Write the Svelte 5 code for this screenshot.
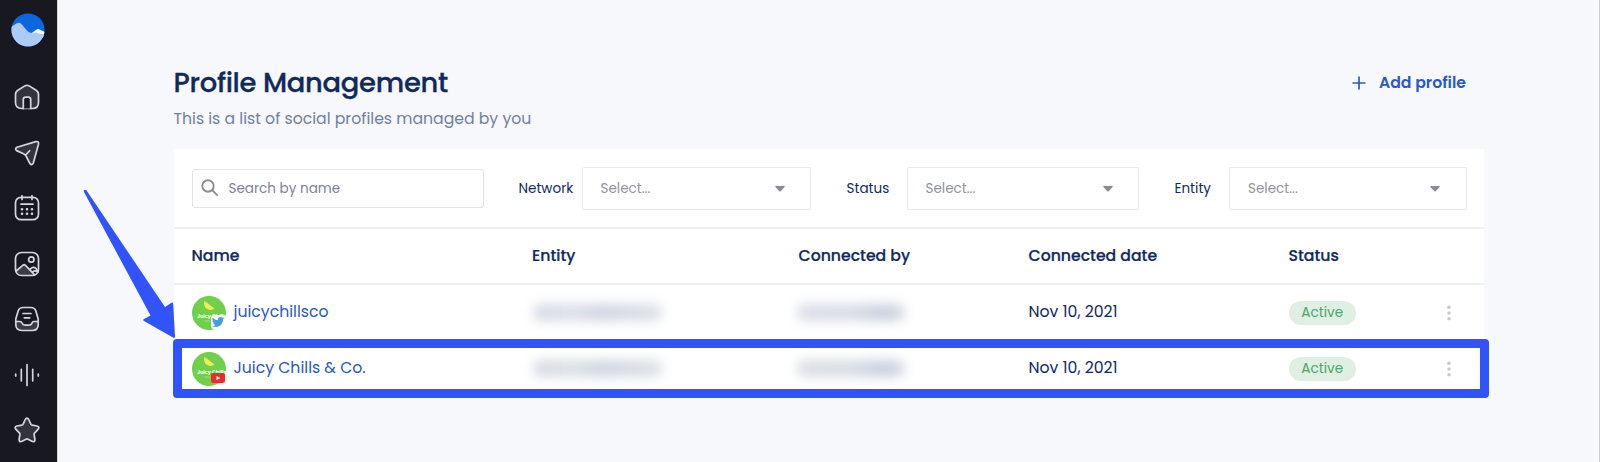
<script lang="ts">
  const filters = [
    { label: 'Network', key: 'network' },
    { label: 'Status', key: 'status' },
    { label: 'Entity', key: 'entity' },
  ];

  const columns = ['Name', 'Entity', 'Connected by', 'Connected date', 'Status'];

  const profiles = [
    { name: 'juicychillsco', network: 'twitter', date: 'Nov 10, 2021', status: 'Active' },
    { name: 'Juicy Chills & Co.', network: 'youtube', date: 'Nov 10, 2021', status: 'Active' },
  ];
</script>

<div class="shell">
  <nav class="sidebar">
    <svg class="logo" viewBox="0 0 34 34">
      <defs>
        <clipPath id="logo-clip"><circle cx="17" cy="17" r="16.6" /></clipPath>
      </defs>
      <g clip-path="url(#logo-clip)">
        <rect width="34" height="34" fill="#0b66df" />
        <path d="M20 20.500L25.500 16.500Q27.500 15.200 29 16.800L34 19V25H20Z" fill="#f4f8ff" />
        <path d="M0 14L5.500 10.500Q8.500 8.500 11 11.500L15 16.500Q18 20 21.500 20L25 19.500Q28 21.500 34 20.800V34H0Z" fill="#aecbf5" />
      </g>
    </svg>
    <svg class="icon" viewBox="0 0 26 26">
      <path class="fill" d="M1.500 10.500Q1.500 8 3.500 6.500L10.800 1.900Q13 .6 15.200 1.900L22.500 6.500Q24.500 8 24.500 10.500V18.500Q24.500 24.500 18.500 24.500H7.500Q1.500 24.500 1.500 18.500Z" />
      <path class="cut" d="M9.300 24.500V15.600Q9.300 13.200 11.700 13.200H14.300Q16.700 13.200 16.700 15.600V24.500" />
    </svg>
    <svg class="icon" viewBox="0 0 26 26">
      <path class="fill" d="M3 7.300L21.800 1.600Q25 .9 24.500 4.200L19.300 23Q18 26 15.800 23.400L12.300 16.500Q11.500 14.500 9.500 13.700L2.600 10.600Q.4 8.800 3 7.300ZM11.500 15.200L15.600 10.700" />
    </svg>
    <svg class="icon" viewBox="0 0 26 26">
      <rect x="1.500" y="2.300" width="23" height="22.400" rx="5.500" />
      <path d="M8 .8V4.500M18 .8V4.500M7 9.200H19" />
      <path class="dots" d="M8 14.300h.01M13 14.300h.01M18 14.300h.01M8 18.800h.01M13 18.800h.01M18 18.800h.01" />
    </svg>
    <svg class="icon" viewBox="0 0 26 26">
      <path class="mass" d="M3 20L9 14.200Q10.200 13.200 11.400 14.300L20.500 24H8Q4 24 3 20Z" />
      <rect x="1.500" y="1.500" width="23" height="23" rx="6" />
      <circle cx="17.300" cy="8.500" r="2.700" />
      <path d="M2.200 20L9 14.200Q10.200 13.200 11.400 14.300L20.700 23.800M16 18.300Q19.300 14.800 22 17.500L24 21M18.500 21.200Q20 18.800 23.500 20.800" />
    </svg>
    <svg class="icon" viewBox="0 0 26 26">
      <path class="mass" d="M2 16H7.500Q9 20 13 20T18.500 16H24Q24.500 24.500 18.500 24.500H7.500Q1.500 24.500 2 16Z" />
      <path d="M9 1.500H17Q20.500 1.500 21.700 4.500L24.200 13V18.500Q24.200 24.500 18.200 24.500H7.800Q1.800 24.500 1.800 18.500V13L4.300 4.500Q5.500 1.500 9 1.500ZM2 15.500H6Q7.500 15.500 8.200 17.300T11 19.200H15Q17 19.200 17.800 17.300T20 15.500H24M9 7.500H17M10.300 11.800H15.700" />
    </svg>
    <svg class="icon" viewBox="0 0 26 26">
      <path d="M1.700 12.200V14M7.300 7.400V18.800M13 2.700V23.500M18.700 7.400V18.800M24.300 12.200V14" />
    </svg>
    <svg class="icon" viewBox="0 0 26 26">
      <path class="fill" d="M11.300 2.500Q13 -.4 14.700 2.500L17 7.300Q17.400 8 18.200 8.200L23 9Q26.300 10 23.800 12.600L20.500 16.100Q20 16.700 20.100 17.500L20.900 22.500Q21 25.500 18 24.300L14 22.200Q13 21.700 12 22.200L8 24.300Q5 25.500 5.100 22.500L5.900 17.500Q6 16.700 5.500 16.100L2.200 12.600Q-.3 10 3 9L7.800 8.200Q8.600 8 9 7.300Z" />
    </svg>
  </nav>

  <main>
    <header class="page-head">
      <div>
        <h1>Profile Management</h1>
        <p>This is a list of social profiles managed by you</p>
      </div>
      <button class="add">
        <svg viewBox="0 0 14 14"><path d="M7 .5V13.500M.5 7H13.500" /></svg>
        <span>Add profile</span>
      </button>
    </header>

    <section class="card">
      <div class="filters">
        <div class="search">
          <svg viewBox="0 0 18 18"><circle cx="7" cy="7" r="5.700" /><path d="M11.200 11.200L16.700 16.700" /></svg>
          <span>Search by name</span>
        </div>
        {#each filters as filter}
          <div class="filter {filter.key}">
            <span class="label">{filter.label}</span>
            <div class="select">
              <span>Select...</span>
              <svg viewBox="0 0 10 6"><path d="M.8 0H9.200Q10.300 .2 9.600 1.100L5.700 5.300Q5 5.900 4.300 5.300L.4 1.100Q-.3 .2 .8 0Z" /></svg>
            </div>
          </div>
        {/each}
      </div>

      <div class="row head">
        {#each columns as column}
          <span>{column}</span>
        {/each}
      </div>

      {#each profiles as profile}
        <div class="row" class:selected={profile.network === 'youtube'}>
          <div class="profile">
            <div class="avatar">
              <svg viewBox="0 0 34 34">
                <circle cx="17" cy="17" r="17" fill="#70cf4b" />
                <path d="M12.500 4.800L22.500 12.500Q19 15.300 14.800 12.800Q10.800 9.800 12.500 4.800Z" fill="#f3e85c" />
                <text x="5" y="21.500">Juicy Chills</text>
                <path d="M12.500 25H18.500" stroke="#b0e59a" stroke-width=".8" />
              </svg>
              {#if profile.network === 'twitter'}
                <svg class="network-badge" viewBox="0 0 14 14">
                  <rect width="14" height="14" rx="3" fill="#fff" />
                  <path transform="translate(.8 .8) scale(.52)" fill="#4a9be6" d="M23.950 4.570a10 10 0 0 1-2.820.77 4.960 4.960 0 0 0 2.160-2.720c-.95.55-2 .95-3.130 1.180a4.920 4.920 0 0 0-8.380 4.480C7.690 8.100 4.070 6.130 1.640 3.160a4.920 4.920 0 0 0 1.520 6.570 4.900 4.900 0 0 1-2.230-.61v.06a4.920 4.920 0 0 0 3.950 4.830 5 5 0 0 1-2.210.08 4.940 4.940 0 0 0 4.600 3.420A9.870 9.870 0 0 1 0 19.540a13.990 13.990 0 0 0 7.550 2.210c9.050 0 14-7.500 14-13.980 0-.21 0-.42-.02-.63a9.940 9.940 0 0 0 2.460-2.550z" />
                </svg>
              {:else}
                <svg class="network-badge" viewBox="0 0 14 14">
                  <rect y="2" width="14" height="10" rx="2" fill="#e62e2b" />
                  <path d="M5.500 4.900L9.300 7L5.500 9.100Z" fill="#fff" />
                </svg>
              {/if}
            </div>
            <span class="name">{profile.name}</span>
          </div>
          <div><i class="redacted entity-mask"></i></div>
          <div><i class="redacted person-mask"></i></div>
          <span class="date">{profile.date}</span>
          <div class="state">
            <span class="pill">{profile.status}</span>
            <svg class="more" viewBox="0 0 4 16"><circle cx="2" cy="2.200" r="1.800" /><circle cx="2" cy="8" r="1.800" /><circle cx="2" cy="13.700" r="1.800" /></svg>
          </div>
        </div>
      {/each}
    </section>
  </main>

  <svg class="pointer" viewBox="0 0 94 150">
    <path d="M1.200 1L3.200 1L82 118L88.500 113.800Q90 113 90.200 115L92 147.500Q92 149.500 90 148.600L61 132Q59.500 131 61 130L67.500 126.500L1 3Q.5 1.500 1.200 1Z" />
  </svg>
</div>

<style>
  :global(body) {
    overflow: hidden;
  }
  .shell {
    position: relative;
    display: flex;
    box-sizing: border-box;
    height: 462px;
    background: #f6f8fc;
    border-right: 1px solid #c9ced9;
    color: #102a5e;
    font-family: Poppins, Inter, 'Liberation Sans', sans-serif;
    font-size: 15.700px;
  }
  .sidebar {
    box-sizing: border-box;
    width: 58px;
    flex: none;
    display: flex;
    flex-direction: column;
    align-items: center;
    gap: 29.500px;
    padding: 13px 2.500px 0 0;
    background: #181820;
    border-right: 1px solid #d4d5da;
  }
  .logo {
    width: 34px;
    height: 34px;
    flex: none;
    margin: 0 -1px 7.500px 0;
  }
  .icon {
    width: 26px;
    height: 26px;
    flex: none;
    fill: none;
    stroke: #d6d6dc;
    stroke-width: 1.700;
    stroke-linecap: round;
    stroke-linejoin: round;
  }
  .icon .fill { fill: #33333d; }
  .icon .cut { fill: #181820; }
  .icon .mass { fill: #3b3b45; stroke: none; }
  .icon .dots { stroke-width: 2.600; }
  main {
    flex: 1;
    padding: 63px 115px 0 115.500px;
  }
  .page-head {
    height: 86px;
    display: flex;
    justify-content: space-between;
    align-items: flex-start;
  }
  h1 {
    margin: 1px 0 0;
    font-size: 27.400px;
    font-weight: 500;
    line-height: 38px;
    letter-spacing: -0.300px;
    -webkit-text-stroke: 0.300px #102a5e;
  }
  p {
    margin: 3.500px 0 0;
    color: #71809f;
    font-size: 15.700px;
    line-height: 26px;
  }
  .add {
    display: flex;
    align-items: center;
    gap: 13px;
    margin: 8px 18px 0 0;
    padding: 0;
    border: 0;
    background: none;
    color: #2859c5;
    font: inherit;
    font-weight: 600;
    line-height: 24px;
  }
  .add svg {
    width: 14px;
    height: 14px;
    fill: none;
    stroke: #2859c5;
    stroke-width: 1.700;
  }
  .card {
    height: 249px;
    background: #fff;
  }
  .filters {
    box-sizing: border-box;
    height: 80px;
    display: flex;
    align-items: center;
    padding: 0 17px 0 18px;
    border-bottom: 2px solid #f0f0f2;
    font-size: 13.550px;
  }
  .search {
    box-sizing: border-box;
    width: 292px;
    height: 39px;
    display: flex;
    align-items: center;
    gap: 10px;
    margin-right: 35px;
    padding: 0 8px;
    border: 1.500px solid #e2e3e7;
    border-radius: 3px;
    color: #7d8299;
  }
  .search svg {
    width: 18px;
    height: 18px;
    fill: none;
    stroke: #8c8c91;
    stroke-width: 1.900;
  }
  .search span,
  .label,
  .select span {
    padding-top: 2px;
  }
  .filter {
    display: flex;
    align-items: center;
  }
  .label { white-space: nowrap; }
  .network .label { width: 63px; }
  .status .label { width: 60px; }
  .entity .label { width: 54.500px; }
  .status,
  .entity { margin-left: 36px; }
  .select {
    box-sizing: border-box;
    width: 229px;
    height: 43px;
    display: flex;
    align-items: center;
    justify-content: space-between;
    padding: 0 25px 0 18px;
    border: 1px solid #e8e9ec;
    border-radius: 2px;
    color: #91929a;
  }
  .status .select { width: 232px; }
  .entity .select {
    width: 238px;
    padding-right: 26px;
  }
  .select svg {
    width: 10px;
    height: 6px;
    margin-top: 1px;
    fill: #898b95;
  }
  .row {
    box-sizing: border-box;
    height: 56px;
    display: grid;
    grid-template-columns: 340.500px 266.500px 230px 260px 1fr;
    align-items: center;
    padding: 0 18px 1px;
  }
  .head {
    border-bottom: 2px solid #eeeff1;
    font-weight: 500;
    -webkit-text-stroke: 0.200px #102a5e;
  }
  .selected {
    height: 59px;
    margin: -2px -5px 0 -1px;
    padding: 0 14px 0 10px;
    border: 9px solid #3053fa;
    border-radius: 4px;
  }
  .profile {
    display: flex;
    align-items: center;
    gap: 8px;
  }
  .avatar {
    position: relative;
    width: 34px;
    height: 34px;
  }
  .avatar > svg:first-child {
    display: block;
    width: 34px;
    height: 34px;
  }
  .avatar text {
    fill: #fff;
    font-size: 5px;
    font-weight: 700;
  }
  .network-badge {
    position: absolute;
    right: 1px;
    bottom: 1px;
    width: 14px;
    height: 14px;
  }
  .name { color: #2859b9; }
  .name,
  .date {
    margin-top: -2px;
  }
  .redacted {
    display: block;
    height: 17px;
    border-radius: 8px;
    background: linear-gradient(90deg, #d6dae3, #dbdfe7 32%, #d0d5e1 52%, #d9dde5 85%, #e1e4ea);
    filter: blur(6px);
  }
  .entity-mask {
    width: 130px;
    margin-left: 1px;
  }
  .person-mask {
    width: 108px;
    margin-left: -2px;
    background: linear-gradient(90deg, #dadde5, #d8dce4 50%, #c8cfde 80%, #d6dbe4);
  }
  .state {
    display: flex;
    align-items: center;
    justify-content: space-between;
    padding-right: 15px;
  }
  .pill {
    width: 67.500px;
    border-radius: 12px;
    background: #dfefe1;
    color: #4da66a;
    font-size: 13.600px;
    line-height: 24px;
    text-align: center;
  }
  .more {
    width: 4px;
    height: 16px;
    fill: #c8c9cd;
  }
  .pointer {
    position: absolute;
    left: 83px;
    top: 189px;
    width: 94px;
    height: 150px;
    fill: #3053fa;
  }
</style>
